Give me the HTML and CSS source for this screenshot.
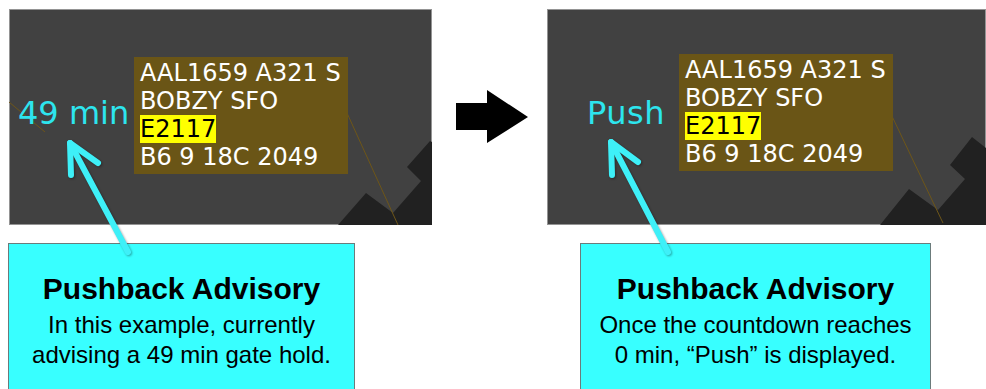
FILE: index.html
```html
<!DOCTYPE html>
<html lang="en">

<head>
    <meta charset="UTF-8">
    <title>Pushback Advisory</title>
    <link rel="stylesheet" href="styles.css">
</head>

<body>
<div class="slide">

    <section class="scene scene-hold">
        <div class="radar">
            <svg class="ground" width="423" height="216" viewBox="0 0 423 216">
                <line x1="0" y1="93" x2="36" y2="123" class="leader"/>
                <polygon points="329,216 357,184 384,204 412,172 398,158 421,132 423,133 423,216" class="ramp"/>
                <line x1="338" y1="104" x2="389" y2="216" class="leader"/>
            </svg>
            <span class="advisory">49 min</span>
            <div class="tag">
                <div>AAL1659 A321 S</div>
                <div>BOBZY SFO</div>
                <div><span class="spot">E2117</span></div>
                <div>B6 9 18C 2049</div>
            </div>
        </div>
        <div class="callout">
            <h2>Pushback Advisory</h2>
            <p>In this example, currently<br>advising a 49 min gate hold.</p>
        </div>
    </section>

    <div class="step">
        <svg width="73" height="54" viewBox="0 0 73 54">
            <polygon points="0,13 31,13 31,0 72,27 31,53 31,40 0,40" fill="#000"/>
        </svg>
    </div>

    <section class="scene scene-push">
        <div class="radar">
            <svg class="ground" width="439" height="216" viewBox="0 0 439 216">
                <polygon points="333,216 362,180 391,201 418,170 403,156 425,128 439,139 439,216" class="ramp"/>
                <line x1="343" y1="103" x2="396" y2="214" class="leader"/>
            </svg>
            <span class="advisory">Push</span>
            <div class="tag">
                <div>AAL1659 A321 S</div>
                <div>BOBZY SFO</div>
                <div><span class="spot">E2117</span></div>
                <div>B6 9 18C 2049</div>
            </div>
        </div>
        <div class="callout">
            <h2>Pushback Advisory</h2>
            <p>Once the countdown reaches<br>0 min, &ldquo;Push&rdquo; is displayed.</p>
        </div>
    </section>

    <!-- callout pointers drawn over both panels -->
    <svg class="pointers" width="986" height="389" viewBox="0 0 986 389">
        <g class="pointer">
            <line x1="128" y1="252" x2="70" y2="143"/>
            <polyline points="98,163 70,143 71,175"/>
        </g>
        <g class="pointer">
            <line x1="668" y1="252" x2="611" y2="142"/>
            <polyline points="638,162 611,142 612,175"/>
        </g>
    </svg>

</div>
</body>
</html>
```

FILE: styles.css
```css
body {
    margin: 0;
    background-color: #FFFFFF;
}

.slide {
    position: relative;
    display: flex;
    align-items: flex-start;
    padding-top: 9px;
    padding-left: 9px;
    height: 380px;
    overflow: hidden;
}

.scene-hold {
    width: 423px;
}
.scene-push {
    width: 439px;
}

.radar {
    position: relative;
    height: 216px;
    background-color: #414141;
    outline: 1px solid #949494;
    outline-offset: -1px;
}
.ground {
    position: absolute;
    left: 0;
    top: 0;
}
.ramp {
    fill: #212121;
}
.leader {
    stroke: #6e5618;
    stroke-width: 1;
}

.tag {
    position: absolute;
    left: 125px;
    top: 48px;
    padding: 2px 7px 3px 6px;
    background-color: #6a5516;
    color: #FFFFFF;
    font-family: "DejaVu Sans", sans-serif;
    font-size: 24px;
    line-height: 28px;
    white-space: nowrap;
}
.spot {
    background-color: #FFFF00;
    color: #000000;
}
.scene-push .tag {
    left: 132px;
    top: 45px;
}

.advisory {
    position: absolute;
    left: 9px;
    top: 88px;
    color: #2de5ee;
    font-family: "DejaVu Sans", sans-serif;
    font-size: 32px;
    line-height: 32px;
}
.scene-push .advisory {
    left: 40px;
    letter-spacing: 0.5px;
}

.callout {
    box-sizing: border-box;
    height: 160px;
    margin-top: 18px;
    padding-top: 27px;
    background-color: #38FFFF;
    border: 1px solid #6b7b7b;
    text-align: center;
    color: #000000;
    font-family: "Liberation Sans", Arial, sans-serif;
}
.scene-hold .callout {
    width: 347px;
    margin-left: -1px;
}
.scene-push .callout {
    width: 351px;
    margin-left: 33px;
}
.callout h2 {
    margin: 0;
    font-size: 30px;
    line-height: 36px;
    font-weight: bold;
}
.callout p {
    margin: 3px 0 0;
    font-size: 24px;
    line-height: 30px;
}

.step {
    width: 115px;
}
.step svg {
    display: block;
    margin-top: 81px;
    margin-left: 24px;
}

.pointers {
    position: absolute;
    left: 0;
    top: 0;
    pointer-events: none;
}
.pointer {
    fill: none;
    stroke: #3ef0f8;
    stroke-width: 6;
    stroke-linecap: round;
    stroke-linejoin: round;
    filter: drop-shadow(1px 1px 1px rgba(0, 0, 0, 0.35));
}
```
